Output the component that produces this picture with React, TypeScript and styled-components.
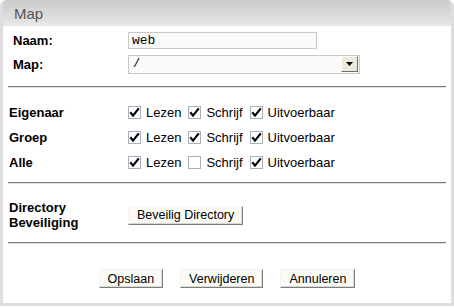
import React from 'react'
import styled, { createGlobalStyle } from 'styled-components'

const GlobalStyle = createGlobalStyle`
  html, body {
    margin: 0;
    padding: 0;
    background: #ffffff;
  }
  body {
    font-family: 'Liberation Sans', Arial, sans-serif;
    color: #000;
  }
`

const Panel = styled.div`
  width: 454px;
  height: 306px;
  box-sizing: border-box;
  border: 3px solid #dedede;
  border-top: none;
  border-radius: 6px 6px 0 0;
  background: #ffffff;
  overflow: hidden;
`

const PanelHeader = styled.div`
  height: 26px;
  display: flex;
  align-items: center;
  padding-left: 11px;
  background: linear-gradient(#cbcbcb, #e8e8e8);
  color: #555;
  font-size: 15px;
`

const Body = styled.div`
  padding: 2px 5px 0 5px;
`

const Section = styled.div<{ $top?: number; $bottom?: number }>`
  padding-top: ${(p) => p.$top ?? 0}px;
  padding-bottom: ${(p) => p.$bottom ?? 0}px;
`

const Row = styled.div<{ $height: number; $indent?: number }>`
  display: grid;
  grid-template-columns: ${(p) => 119 - (p.$indent ?? 0)}px 1fr;
  padding-left: ${(p) => (p.$indent ?? 0) + 1}px;
  height: ${(p) => p.$height}px;
  align-items: center;
`

const Label = styled.div`
  font-weight: bold;
  font-size: 13px;
  line-height: 15px;
`

const TextInput = styled.div`
  width: 184px;
  height: 15px;
  border: 1px solid #c8c8c8;
  background: #fafafa;
  font-family: 'Liberation Mono', 'Courier New', monospace;
  font-size: 13px;
  line-height: 15px;
  padding-left: 3px;
  box-sizing: content-box;
`

const Select = styled.div`
  width: 226px;
  height: 17px;
  border: 1px solid #c8c8c8;
  background: #fafafa;
  display: flex;
  align-items: center;
  justify-content: space-between;
  font-family: 'Liberation Mono', 'Courier New', monospace;
  font-size: 12px;
  padding-left: 4px;
`

const SelectArrow = styled.div`
  width: 15px;
  height: 14px;
  margin-right: 1px;
  background: #ece9d8;
  border: 1px solid;
  border-color: #fff #716f64 #716f64 #fff;
  display: flex;
  align-items: center;
  justify-content: center;
`

const Rule = styled.hr`
  margin: 0;
  border: none;
  border-top: 1px solid #7a7a7a;
  border-bottom: 1px solid #e2e2e2;
  height: 0;
`

const Options = styled.div`
  display: flex;
  align-items: center;
  font-size: 13px;
`

const Option = styled.label`
  display: flex;
  align-items: center;
  margin-right: 7px;
`

const Box = styled.span`
  width: 13px;
  height: 13px;
  box-sizing: border-box;
  border: 1px solid #a9b0bb;
  background: #fff;
  display: inline-flex;
  align-items: center;
  justify-content: center;
  margin-right: 5px;
`

const Button = styled.button`
  font-family: 'Liberation Sans', Arial, sans-serif;
  font-size: 12.5px;
  height: 19px;
  padding: 0 8px;
  background: #fbfbf6;
  color: #000;
  border: 1px solid;
  border-color: #f4f4f4 #7d7d7d #7d7d7d #f4f4f4;
  box-shadow: inset -1px -1px 0 #d8d8d0;
  line-height: 16px;
`

const Buttons = styled.div`
  display: flex;
  justify-content: center;
  gap: 17px;
  padding-top: 25px;
`

function Check({ on }: { on: boolean }) {
  return (
    <Box>
      {on && (
        <svg width="11" height="11" viewBox="0 0 11 11">
          <path d="M1.3 5.3 L4 8.6 L9.8 1.4" stroke="#000" strokeWidth="2.2" fill="none" />
        </svg>
      )}
    </Box>
  )
}

const perms = [
  { name: 'Eigenaar', values: [true, true, true] },
  { name: 'Groep', values: [true, true, true] },
  { name: 'Alle', values: [true, false, true] },
]

const labels = ['Lezen', 'Schrijf', 'Uitvoerbaar']

export default function App() {
  return (
    <>
      <GlobalStyle />
      <Panel>
        <PanelHeader>Map</PanelHeader>
        <Body>
          <Section $bottom={10}>
            <Row $height={24} $indent={4}>
              <Label>Naam:</Label>
              <TextInput>web</TextInput>
            </Row>
            <Row $height={24} $indent={4}>
              <Label>Map:</Label>
              <Select>
                <span>/</span>
                <SelectArrow>
                  <svg width="7" height="4" viewBox="0 0 7 4">
                    <path d="M0 0 H7 L3.5 4 Z" fill="#000" />
                  </svg>
                </SelectArrow>
              </Select>
            </Row>
          </Section>
          <Rule />
          <Section $top={12} $bottom={7}>
            {perms.map((p) => (
              <Row key={p.name} $height={25}>
                <Label>{p.name}</Label>
                <Options>
                  {labels.map((l, i) => (
                    <Option key={l}>
                      <Check on={p.values[i]} />
                      {l}
                    </Option>
                  ))}
                </Options>
              </Row>
            ))}
          </Section>
          <Rule />
          <Section $top={15} $bottom={11}>
            <Row $height={32}>
              <Label>
                Directory
                <br />
                Beveiliging
              </Label>
              <div>
                <Button>Beveilig Directory</Button>
              </div>
            </Row>
          </Section>
          <Rule />
          <Buttons>
            <Button>Opslaan</Button>
            <Button>Verwijderen</Button>
            <Button>Annuleren</Button>
          </Buttons>
        </Body>
      </Panel>
    </>
  )
}
